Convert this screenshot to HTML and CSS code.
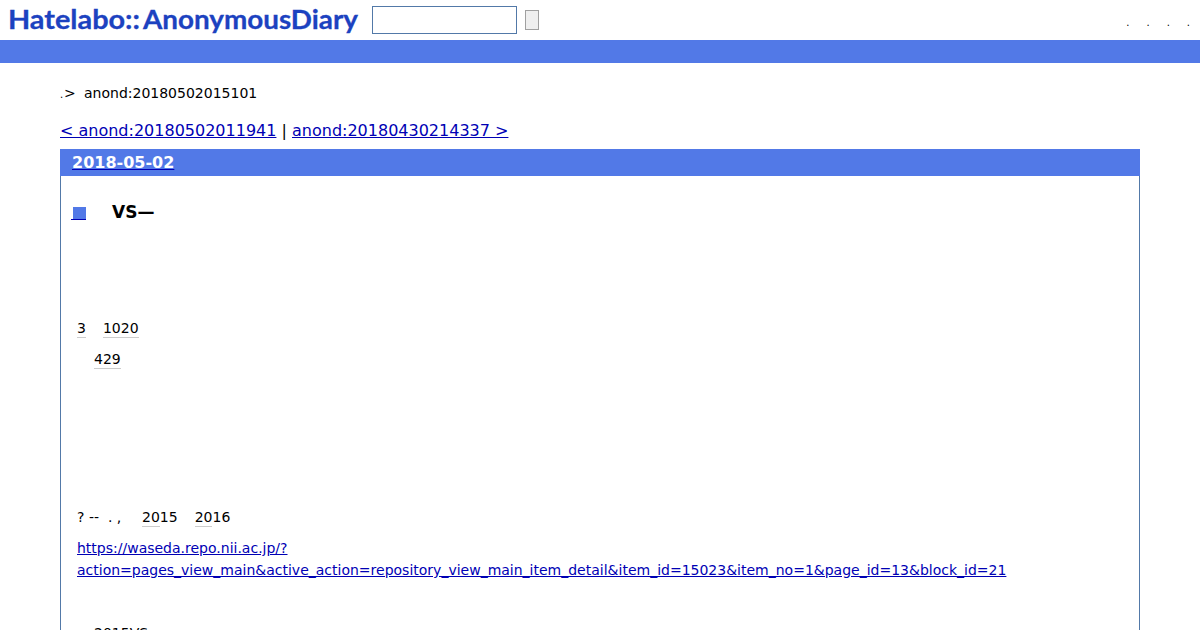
FILE: index.html
```html
<!DOCTYPE html>
<html lang="ja">
<head>
    <meta charset="UTF-8">
    <meta name="viewport" content="width=device-width, initial-scale=1.0">
    <title>anond:20180502015101</title>
    <link rel="stylesheet" href="styles.css">
</head>
<body>
    <div class="header">
        <svg class="logo" width="364" height="40" viewBox="0 0 364 40">
            <text x="8" y="29" textLength="132" lengthAdjust="spacingAndGlyphs">Hatelabo::</text>
            <text x="143" y="29" textLength="215" lengthAdjust="spacingAndGlyphs">AnonymousDiary</text>
        </svg>
        <form class="search">
            <input type="text" class="search-word">
            <button type="button" class="search-button"></button>
        </form>
        <ul class="menu">
            <li>.</li>
            <li>.</li>
            <li>.</li>
            <li>.</li>
        </ul>
    </div>
    <div class="bar"></div>
    <div class="content">
        <div class="breadcrumb"><span class="home">.</span><span class="arrow">&gt;</span><span>anond:20180502015101</span></div>
        <div class="pager"><a href="#">&lt; anond:20180502011941</a> | <a href="#">anond:20180430214337 &gt;</a></div>
        <div class="day">
            <h2><a href="#">2018-05-02</a></h2>
            <div class="section">
                <h3><a href="#" class="sanchor"><span class="square"></span></a>VS—</h3>
                <p class="scores"><span><a href="#" class="keyword">3</a></span><span><a href="#" class="keyword">1020</a></span></p>
                <p class="indent"><a href="#" class="keyword">429</a></p>
                <p class="years"><span class="marks">? --&nbsp; . ,</span><span><a href="#" class="keyword">20</a>15</span><span><a href="#" class="keyword">20</a>16</span></p>
                <p class="source"><a href="#">https://waseda.repo.nii.ac.jp/?<br>action=pages_view_main&amp;active_action=repository_view_main_item_detail&amp;item_id=15023&amp;item_no=1&amp;page_id=13&amp;block_id=21</a></p>
                <p class="indent last">2015VS</p>
            </div>
        </div>
    </div>
</body>
</html>
```

FILE: styles.css
```css
body {
    font-family: "DejaVu Sans", sans-serif;
    font-size: 14px;
    color: #000;
    background-color: #fff;
    margin: 0;
    height: 630px;
    overflow: hidden;
}

a {
    color: #0000b4;
}

.header {
    display: flex;
    height: 40px;
}

.logo text {
    font-family: Lato, sans-serif;
    font-size: 27px;
    font-weight: bold;
    fill: #1c42c0;
    stroke: #1c42c0;
    stroke-width: 0.3px;
}

.search {
    display: flex;
    align-items: center;
    margin-left: 8px;
}

.search-word {
    box-sizing: border-box;
    width: 145px;
    height: 28px;
    border: 1px solid #5279a8;
    padding: 0;
}

.search-button {
    box-sizing: border-box;
    width: 14px;
    height: 20px;
    margin-left: 8px;
    padding: 0;
    border: 1px solid #a0a0a0;
    background-color: #efefef;
}

.menu {
    display: flex;
    gap: 17px;
    list-style: none;
    margin: 16px 10px 0 auto;
    padding: 0;
    font-size: 10px;
    line-height: 14px;
}

.bar {
    height: 23px;
    background-color: #5279e7;
}

.content {
    padding: 0 60px;
}

.breadcrumb {
    display: flex;
    padding-top: 19px;
    line-height: 22px;
}

.home {
    width: 4px;
    font-size: 10px;
    line-height: 26px;
    height: 22px;
}

.arrow {
    width: 20px;
}

.pager {
    margin-top: 16px;
    font-size: 16px;
    line-height: 22px;
}

.day {
    margin-top: 7px;
    border: 1px solid #5279a8;
}

.day h2 {
    margin: -1px -1px 0;
    padding-left: 12px;
    font-size: 16px;
    line-height: 27px;
    background-color: #5279e7;
}

.day h2 a {
    color: #fff;
    text-decoration-color: #0000b4;
}

.section {
    padding: 24px 16px 0;
}

.section h3 {
    display: flex;
    margin: 0 0 93px -6px;
    font-size: 17px;
    line-height: 24px;
}

.sanchor {
    width: 15px;
    height: 13px;
    margin: 7px 26px 0 0;
    border-bottom: 1px solid #0000b4;
    box-sizing: border-box;
}

.square {
    display: block;
    width: 13px;
    height: 12px;
    margin-left: 2px;
    background-color: #5279e7;
}

.section p {
    margin: 0 0 9px;
    line-height: 22px;
}

.keyword {
    color: #000;
    text-decoration: none;
    border-bottom: 1px solid #ccc;
    padding-bottom: 1px;
}

.scores,
.years {
    display: flex;
    gap: 17px;
}

.section .indent {
    padding-left: 17px;
}

.section .years {
    margin-top: 136px;
}

.marks {
    width: 48px;
}

.section .last {
    margin-top: 41px;
}
```
